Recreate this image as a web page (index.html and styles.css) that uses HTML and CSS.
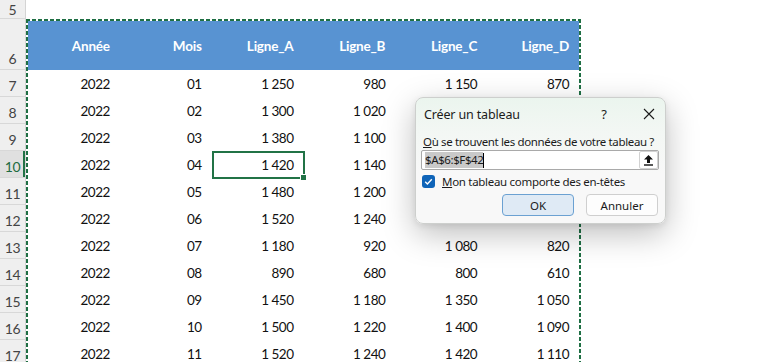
FILE: index.html
```html
<!DOCTYPE html>
<html lang="fr">
<head>
    <meta charset="UTF-8">
    <title>Créer un tableau</title>
    <link rel="stylesheet" href="styles.css">
</head>
<body>
<div class="sheet">
    <div class="rownums">
        <div class="rn r5">5</div>
        <div class="rn r6">6</div>
        <div class="rn">7</div>
        <div class="rn">8</div>
        <div class="rn">9</div>
        <div class="rn on">10</div>
        <div class="rn">11</div>
        <div class="rn">12</div>
        <div class="rn">13</div>
        <div class="rn">14</div>
        <div class="rn">15</div>
        <div class="rn">16</div>
        <div class="rn">17</div>
    </div>
    <div class="cells">
        <div class="blank"></div>
        <div class="range">
            <table class="data">
                <thead>
                <tr><th>Année</th><th>Mois</th><th>Ligne_A</th><th>Ligne_B</th><th>Ligne_C</th><th>Ligne_D</th></tr>
                </thead>
                <tbody>
                <tr><td>2022</td><td>01</td><td>1 250</td><td>980</td><td>1 150</td><td>870</td></tr>
                <tr><td>2022</td><td>02</td><td>1 300</td><td>1 020</td><td>1 200</td><td>900</td></tr>
                <tr><td>2022</td><td>03</td><td>1 380</td><td>1 100</td><td>1 260</td><td>940</td></tr>
                <tr><td>2022</td><td>04</td><td class="active">1 420</td><td>1 140</td><td>1 300</td><td>980</td></tr>
                <tr><td>2022</td><td>05</td><td>1 480</td><td>1 200</td><td>1 350</td><td>1 020</td></tr>
                <tr><td>2022</td><td>06</td><td>1 520</td><td>1 240</td><td>1 400</td><td>1 060</td></tr>
                <tr><td>2022</td><td>07</td><td>1 180</td><td>920</td><td>1 080</td><td>820</td></tr>
                <tr><td>2022</td><td>08</td><td>890</td><td>680</td><td>800</td><td>610</td></tr>
                <tr><td>2022</td><td>09</td><td>1 450</td><td>1 180</td><td>1 350</td><td>1 050</td></tr>
                <tr><td>2022</td><td>10</td><td>1 500</td><td>1 220</td><td>1 400</td><td>1 090</td></tr>
                <tr><td>2022</td><td>11</td><td>1 520</td><td>1 240</td><td>1 420</td><td>1 110</td></tr>
                </tbody>
            </table>
        </div>
    </div>

    <div class="dialog">
        <div class="dlg-title">
            <span class="dlg-name">Créer un tableau</span>
            <span class="dlg-help">?</span>
            <span class="dlg-close">
                <svg width="12" height="12" viewBox="0 0 12 12"><path d="M1 1L11 11M11 1L1 11" stroke="#1a1a1a" stroke-width="1.1" fill="none"/></svg>
            </span>
        </div>
        <div class="dlg-label"><u>O</u>ù se trouvent les données de votre tableau ?</div>
        <div class="dlg-input">
            <span class="sel">$A$6:$F$42</span><span class="caret"></span>
            <span class="pick">
                <svg width="11" height="12" viewBox="0 0 11 12"><path d="M5.5 1L10 5.5H7V9H4V5.5H1Z" fill="#111"/><rect x="1" y="10.3" width="9" height="1.4" fill="#111"/></svg>
            </span>
        </div>
        <div class="dlg-check">
            <span class="box">
                <svg width="13" height="13" viewBox="0 0 13 13"><path d="M3.2 6.8L5.4 9L9.8 4.3" stroke="#fff" stroke-width="1.4" fill="none"/></svg>
            </span>
            <span class="check-text"><u>M</u>on tableau comporte des en-têtes</span>
        </div>
        <div class="dlg-btns">
            <button class="btn ok">OK</button>
            <button class="btn">Annuler</button>
        </div>
    </div>
</div>
</body>
</html>
```

FILE: styles.css
```css
*{
    padding: 0;
    margin: 0;
    box-sizing: border-box;
}
body{
    background: #fff;
    overflow: hidden;
    font-family: Lato, "Liberation Sans", sans-serif;
}
.sheet{
    display: flex;
    position: relative;
    width: 771px;
    height: 362px;
    overflow: hidden;
}
.rownums{
    width: 26px;
    background: #efefef;
    border-right: 1px solid #d4d4d4;
}
.rn{
    height: 27px;
    border-bottom: 1px solid #d8d8d8;
    display: flex;
    align-items: flex-end;
    justify-content: center;
    padding-bottom: 2px;
    font-size: 14px;
    color: #444;
    letter-spacing: -0.3px;
}
.rn.r5{
    height: 19px;
    padding-bottom: 0;
}
.rn.r6{
    height: 51px;
}
.rn.on{
    background: #e0e0e0;
    color: #1d6b40;
    box-shadow: inset -2px 0 0 #217346;
}
.cells{
    flex: 1;
}
.blank{
    height: 19px;
}
.range{
    width: 555px;
    padding: 2px 2px 40px;
    background:
        repeating-linear-gradient(90deg, #1f6f44 0 4px, transparent 4px 6px) top left / 100% 2px no-repeat,
        repeating-linear-gradient(180deg, #1f6f44 0 4px, transparent 4px 6px) top left / 2px 100% no-repeat,
        repeating-linear-gradient(180deg, #1f6f44 0 4px, transparent 4px 6px) top right / 2px 100% no-repeat;
}
.data{
    width: 551px;
    table-layout: fixed;
    border-collapse: collapse;
    font-size: 13.5px;
    color: #111;
}
.data th{
    height: 49px;
    background: #5893d2;
    color: #fff;
    font-weight: bold;
    text-align: right;
    padding-right: 10px;
    letter-spacing: -0.2px;
}
.data td{
    height: 27px;
    text-align: right;
    padding: 1px 10px 0 0;
    letter-spacing: -0.5px;
    background: #fff;
}
.data td.active{
    position: relative;
}
.data td.active::after{
    content: "";
    position: absolute;
    left: 0;
    top: 0;
    right: -2px;
    bottom: -1px;
    border: 2px solid #217346;
}
.data td.active::before{
    content: "";
    position: absolute;
    right: -4px;
    bottom: -3px;
    width: 5px;
    height: 5px;
    background: #217346;
    border: 1px solid #fff;
    z-index: 1;
}

.dialog{
    position: absolute;
    left: 415px;
    top: 97px;
    width: 251px;
    height: 127px;
    padding: 0 6px 0 5px;
    border: 1px solid #cdcfcd;
    border-radius: 8px;
    background: linear-gradient(#ebf5ee, #f3f7f4 28%, #f8f8f8 60%);
    box-shadow: 0 10px 32px rgba(0, 0, 0, 0.26), 0 2px 6px rgba(0, 0, 0, 0.08);
    font-family: "Noto Sans", "Open Sans", sans-serif;
    font-size: 11.5px;
    color: #1b1b1b;
    letter-spacing: -0.15px;
    white-space: nowrap;
}
.dlg-title{
    height: 32px;
    display: flex;
    align-items: center;
    padding-left: 3px;
    font-size: 12.5px;
}
.dlg-name{
    flex: 1;
}
.dlg-help{
    width: 20px;
    text-align: center;
    margin-right: 25px;
    font-size: 13px;
}
.dlg-close{
    width: 20px;
    display: flex;
    justify-content: center;
}
.dlg-label{
    margin-top: 4px;
    height: 16px;
    line-height: 16px;
    padding-left: 2px;
    letter-spacing: -0.36px;
}
.dlg-input{
    height: 20px;
    border: 1px solid #a9a9a9;
    border-radius: 2px;
    background: #fff;
    display: flex;
    align-items: center;
    padding-left: 3px;
}
.dlg-input .sel{
    background: #c9c9c9;
    line-height: 16px;
    letter-spacing: -0.4px;
}
.dlg-input .caret{
    width: 1px;
    height: 15px;
    background: #000;
}
.dlg-input .pick{
    margin-left: auto;
    width: 19px;
    height: 18px;
    border: 1px solid #d2d2d2;
    border-radius: 2px;
    display: flex;
    align-items: center;
    justify-content: center;
    background: #fff;
}
.dlg-check{
    margin-top: 4px;
    height: 15px;
    display: flex;
    align-items: center;
    gap: 7px;
    padding-left: 1px;
}
.dlg-check .box{
    width: 13px;
    height: 13px;
    border-radius: 3px;
    background: #0f64b8;
    display: flex;
}
.check-text{
    letter-spacing: -0.3px;
}
.dlg-btns{
    margin-top: 5px;
    display: flex;
    justify-content: flex-end;
    gap: 12px;
    padding-right: 1px;
}
.btn{
    width: 72px;
    height: 22px;
    border: 1px solid #cfcfcf;
    border-radius: 4px;
    background: #fdfdfd;
    font-family: "Noto Sans", "Open Sans", sans-serif;
    font-size: 11.5px;
    color: #1b1b1b;
}
.btn.ok{
    background: #dfeaf5;
    border-color: #6ba1d2;
}
```
